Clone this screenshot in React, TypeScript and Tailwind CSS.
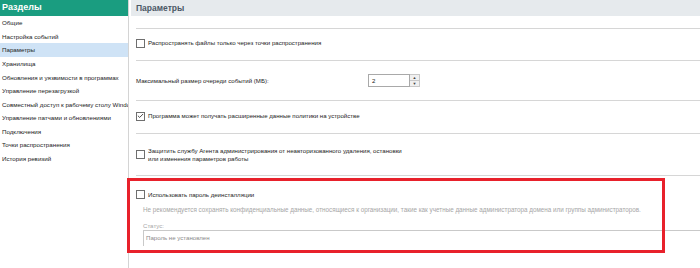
import { Check } from "lucide-react";

const sections = [
  "Общие",
  "Настройка событий",
  "Параметры",
  "Хранилища",
  "Обновления и уязвимости в программах",
  "Управление перезагрузкой",
  "Совместный доступ к рабочему столу Windows",
  "Управление патчами и обновлениями",
  "Подключения",
  "Точки распространения",
  "История ревизий",
];

function Box({ checked = false }: { checked?: boolean }) {
  return (
    <span className="flex h-[9px] w-[9px] shrink-0 items-center justify-center border border-[#6f6f6f] bg-white">
      {checked && <Check className="h-[8px] w-[8px] text-[#333]" strokeWidth={3} />}
    </span>
  );
}

function Sep() {
  return <div className="h-px bg-[#d6d6d6]" />;
}

export default function App() {
  return (
    <div
      className="flex h-[268px] w-[700px] overflow-hidden bg-white text-[6.1px] text-[#222]"
      style={{ fontFamily: '"Liberation Sans", Arial, sans-serif' }}
    >
      {/* sidebar */}
      <aside className="w-[129px] shrink-0 border-r border-[#d4d4d4]">
        <div className="flex h-[16px] items-center bg-[#1a9d80] pl-[2px] text-[9px] font-bold text-white">
          Разделы
        </div>
        <ul className="text-[6.2px]">
          {sections.map((s) => (
            <li
              key={s}
              className={
                "flex h-[13.6px] items-center overflow-hidden whitespace-nowrap pl-[2px] " +
                (s === "Параметры" ? "bg-[#cfe3f6]" : "")
              }
            >
              {s}
            </li>
          ))}
        </ul>
      </aside>

      {/* main */}
      <main className="flex-1 pl-[2px]">
        <div className="flex h-[16px] items-center bg-[#e6eaed] pl-[5px] text-[8.5px] font-bold text-[#4b5865]">
          Параметры
        </div>

        <div className="relative pl-[5px]">
          <div className="h-[12px]" />
          <Sep />
          <div className="flex h-[31px] items-center gap-[3px] pb-[3px]">
            <Box />
            <span>Распространять файлы только через точки распространения</span>
          </div>
          <Sep />
          <div className="flex h-[39px] items-center">
            <span className="w-[232px]">Максимальный размер очереди событий (МБ):</span>
            <div className="flex h-[13px]">
              <div className="flex w-[42px] items-center border border-[#a9a9a9] pl-[3px]">2</div>
              <div className="flex w-[10px] flex-col border border-l-0 border-[#c8c8c8] bg-[#f0f0f0]">
                <span className="flex flex-1 items-center justify-center border-b border-[#c8c8c8] text-[4px] leading-none text-[#444]">
                  ▲
                </span>
                <span className="flex flex-1 items-center justify-center text-[4px] leading-none text-[#444]">
                  ▼
                </span>
              </div>
            </div>
          </div>
          <Sep />
          <div className="flex h-[32px] items-center gap-[3px] pb-[2px]">
            <Box checked />
            <span>Программа может получать расширенные данные политики на устройстве</span>
          </div>
          <Sep />
          <div className="flex h-[41px] items-center gap-[3px]">
            <Box />
            <span className="leading-[8px]">
              Защитить службу Агента администрирования от неавторизованного удаления, остановки
              <br />
              или изменения параметров работы
            </span>
          </div>
          <Sep />

          <div className="h-[78px] pt-[14px]">
            <div className="flex items-center gap-[3px]">
              <Box />
              <span>Использовать пароль деинсталляции</span>
            </div>
            <div className="pl-[7px]">
              <p className="mt-[6px] text-[6.3px] text-[#a6a6a6]">
                Не рекомендуется сохранять конфиденциальные данные, относящиеся к организации, такие как учетные данные администратора домена или группы администраторов.
              </p>
              <p className="mt-[6px] text-[#a6a6a6]">Статус:</p>
              <div className="h-[16px] border-l border-t border-[#c9c9c9] pl-[2px] pt-[2px] text-[#8a8a8a]">
                Пароль не установлен
              </div>
            </div>
          </div>

          {/* annotation frame */}
          <div className="pointer-events-none absolute left-[-4px] top-[162px] h-[75px] w-[538px] border-[3px] border-[#e8212b]" />
        </div>
      </main>
    </div>
  );
}
